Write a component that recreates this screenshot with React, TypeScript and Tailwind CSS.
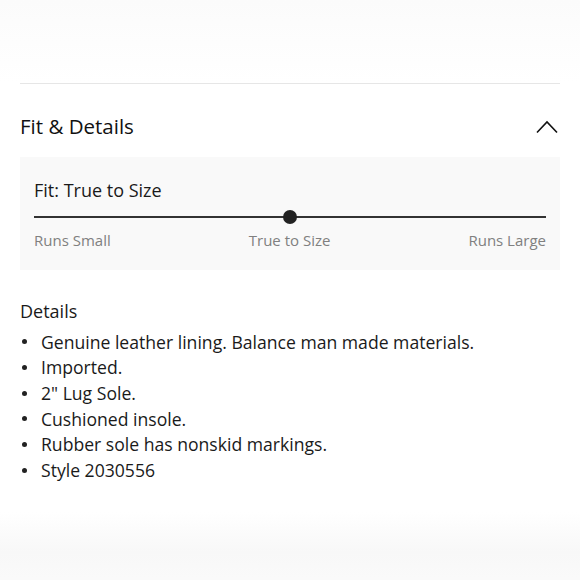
import React from "react";

export default function App() {
  const items = [
    "Genuine leather lining. Balance man made materials.",
    "Imported.",
    '2" Lug Sole.',
    "Cushioned insole.",
    "Rubber sole has nonskid markings.",
    "Style 2030556",
  ];
  return (
    <div
      className="w-[580px] h-[580px] bg-white overflow-hidden text-[#1a1a1a]"
      style={{ fontFamily: "'Open Sans', sans-serif" }}
    >
      <div className="h-[83px] bg-gradient-to-b from-[#fbfbfb] to-white" />
      <div className="mx-[20px] border-t border-[#e6e6e6]" />
      <div className="mx-[20px] flex items-center justify-between h-[73px] pt-[12px]">
        <span className="text-[20.5px] leading-none text-[#111]">Fit &amp; Details</span>
        <svg width="22" height="14" viewBox="0 0 22 14" className="mr-[2px]">
          <path d="M1 12.5 L11 2 L21 12.5" fill="none" stroke="#111" strokeWidth="1.6" />
        </svg>
      </div>
      <div className="mx-[20px] bg-[#f9f9f9] h-[113px] px-[14px] pt-[24px]">
        <div className="text-[18px] leading-none text-[#1a1a1a]">Fit: True to Size</div>
        <div className="relative mt-[11px] h-[14px] flex items-center">
          <div className="w-full h-[2px] bg-[#333]" />
          <div className="absolute left-[249px] top-0 w-[14px] h-[14px] rounded-full bg-[#222]" />
        </div>
        <div className="mt-[9px] flex justify-between text-[15px] leading-none text-[#808080]">
          <span>Runs Small</span>
          <span>True to Size</span>
          <span>Runs Large</span>
        </div>
      </div>
      <div className="mx-[20px] mt-[32px]">
        <div className="text-[18px] leading-none text-[#1a1a1a]">Details</div>
        <ul className="mt-[9px]">
          {items.map((t) => (
            <li key={t} className="flex items-center h-[25.7px] text-[17.6px] text-[#1a1a1a]">
              <span className="w-[5px] h-[5px] rounded-full bg-[#222] ml-[2px] mr-[14px]" />
              {t}
            </li>
          ))}
        </ul>
      </div>
      <div className="mt-[29px] h-[80px] bg-gradient-to-b from-white via-[#f8f8f8] to-[#fbfbfb]" />
    </div>
  );
}
